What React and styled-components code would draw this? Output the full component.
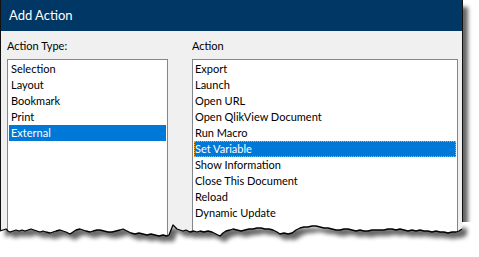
import React from "react";
import styled, { createGlobalStyle } from "styled-components";

const GlobalStyle = createGlobalStyle`
  html, body { margin: 0; padding: 0; background: #ffffff; }
  body { font-family: Lato, "Noto Sans", sans-serif; }
`;

const Stage = styled.div`
  position: relative;
  width: 479px;
  height: 257px;
  overflow: hidden;
  background: #ffffff;
`;

const Window = styled.div`
  width: 463px;
  height: 236px;
  box-sizing: border-box;
  border-left: 1px solid #111;
  border-right: 1px solid #111;
  display: flex;
  flex-direction: column;
  background: #f0f0f0;
  box-shadow: 5px 7px 4px rgba(0, 0, 0, 0.6);
`;

const TitleBar = styled.div`
  height: 31px;
  flex: none;
  background: #003764;
  color: #ffffff;
  font-size: 13px;
  line-height: 31px;
  padding-left: 8px;
`;

const Body = styled.div`
  flex: 1;
  min-height: 0;
  display: grid;
  grid-template-columns: 161px 266px;
  grid-template-rows: 16px 1fr;
  column-gap: 24px;
  row-gap: 5px;
  padding: 7px 4px 0 6px;
`;

const Label = styled.div`
  font-size: 11px;
  line-height: 16px;
  color: #000;
  white-space: nowrap;
`;

const ListBox = styled.div`
  background: #fff;
  border: 1px solid #82878f;
  border-bottom: none;
  padding: 1px;
  display: flex;
  flex-direction: column;
  min-height: 0;
`;

const Item = styled.div`
  height: 16px;
  box-sizing: border-box;
  padding-left: ${(p) => (p.$left ? 2 : 1)}px;
  font-size: 11px;
  line-height: 16px;
  white-space: nowrap;
  color: ${(p) => (p.$selected ? "#fff" : "#000")};
  background: ${(p) => (p.$selected ? "#0078d7" : "transparent")};
  outline: ${(p) => (p.$focused ? "1px dotted #f5a623" : "none")};
  outline-offset: -1px;
`;

const TornEdge = styled.svg`
  position: absolute;
  left: 0;
  top: 0;
  width: 479px;
  height: 257px;
  pointer-events: none;
`;

const edge = [
  [0,231],[3,230],[6,229],[8,231],[10,232],[13,231],[16,230],[19,231],[22,230],[25,231],
  [28,230],[31,229],[34,230],[37,231],[40,232],[43,231],[46,232],[50,233],[53,232],[56,231],
  [60,230],[63,231],[66,232],[70,234],[73,232],[76,230],[80,229],[83,230],[86,231],[90,232],
  [93,231],[97,230],[100,230],[104,231],[108,232],[112,232],[116,231],[120,230],[123,229],[127,231],
  [131,233],[135,234],[139,233],[143,234],[147,235],[151,234],[155,235],[159,236],[163,235],[167,236],
  [169,235],[171,230],[173,225],[175,227],[177,229],[180,230],[183,231],[186,230],[190,232],[194,231],
  [197,232],[200,231],[204,232],[208,231],[212,232],[216,234],[220,236],[223,233],[226,231],[230,230],
  [233,229],[237,230],[241,231],[245,230],[249,229],[253,229],[257,228],[261,228],[265,229],[269,229],
  [273,230],[277,232],[280,234],[284,233],[288,234],[292,233],[296,230],[300,228],[304,227],[308,227],
  [312,226],[316,226],[320,227],[324,228],[328,228],[332,229],[336,230],[340,230],[344,229],[348,229],
  [352,230],[356,231],[360,230],[364,231],[368,231],[372,230],[376,230],[380,230],[384,230],[388,229],
  [392,229],[396,230],[400,229],[404,230],[408,231],[412,230],[416,231],[420,230],[424,231],[428,231],
  [432,232],[436,231],[440,232],[444,232],[448,233],[452,232],[456,232],[459,231],[462,229],
];

const pts = (arr) => arr.map(([x, y]) => `${x},${y}`).join(" ");
const below = `0,257 ${pts(edge)} 462,222 479,222 479,257`;
const windowPart = `0,222 462,222 ${pts([...edge].reverse())}`;

const typeItems = ["Selection", "Layout", "Bookmark", "Print", "External"];
const actionItems = [
  "Export",
  "Launch",
  "Open URL",
  "Open QlikView Document",
  "Run Macro",
  "Set Variable",
  "Show Information",
  "Close This Document",
  "Reload",
  "Dynamic Update",
];

export default function App() {
  return (
    <>
      <GlobalStyle />
      <Stage>
        <Window>
          <TitleBar>Add Action</TitleBar>
          <Body>
            <Label>Action Type:</Label>
            <Label>Action</Label>
            <ListBox>
              {typeItems.map((t) => (
                <Item key={t} $left $selected={t === "External"}>
                  {t}
                </Item>
              ))}
            </ListBox>
            <ListBox>
              {actionItems.map((t) => (
                <Item
                  key={t}
                  $selected={t === "Set Variable"}
                  $focused={t === "Set Variable"}
                >
                  {t}
                </Item>
              ))}
            </ListBox>
          </Body>
        </Window>
        <TornEdge viewBox="0 0 479 257">
          <defs>
            <clipPath id="outside">
              <polygon points={below} />
            </clipPath>
            <filter id="blur" x="-10%" y="-100%" width="120%" height="300%">
              <feGaussianBlur stdDeviation="2" />
            </filter>
          </defs>
          <polygon points={below} fill="#ffffff" />
          <g clipPath="url(#outside)">
            <polygon
              points={windowPart}
              transform="translate(5 6)"
              fill="#000"
              opacity="0.6"
              filter="url(#blur)"
            />
          </g>
          <polyline
            points={pts(edge)}
            fill="none"
            stroke="#000"
            strokeWidth="1.3"
            strokeLinejoin="round"
          />
        </TornEdge>
      </Stage>
    </>
  );
}
